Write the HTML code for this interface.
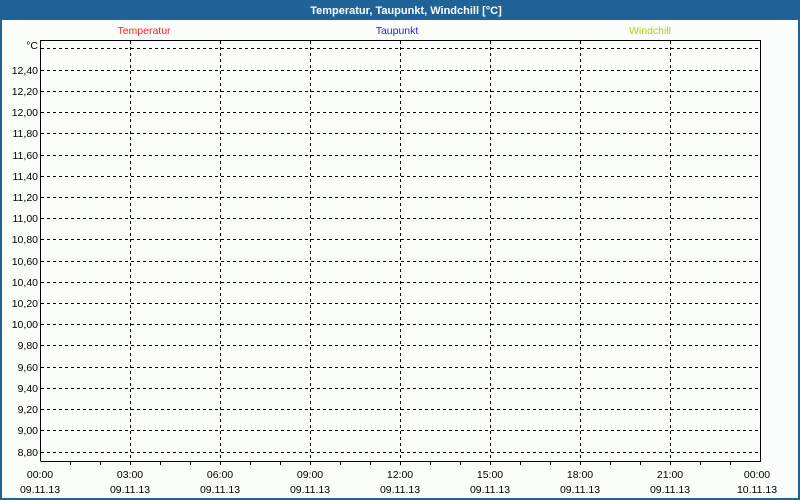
<!DOCTYPE html>
<html><head><meta charset="utf-8"><style>
html,body{margin:0;padding:0;width:800px;height:500px;overflow:hidden;background:#fbfdfb}
svg{display:block}
text{font-family:"Liberation Sans",sans-serif;font-size:10.5px}
</style></head><body>
<svg width="800" height="500" xmlns="http://www.w3.org/2000/svg">
<rect x="0" y="0" width="800" height="500" fill="#fbfdfb"/>
<rect x="1" y="1" width="798" height="498" fill="none" stroke="#1f6399" stroke-width="2"/>
<rect x="0" y="0" width="800" height="20" fill="#1f6399"/>
<text x="406" y="14" fill="#fff" text-anchor="middle" font-weight="bold" style="font-size:11px">Temperatur, Taupunkt, Windchill [°C]</text>
<text x="144" y="34" fill="#ff2020" text-anchor="middle">Temperatur</text>
<text x="397" y="34" fill="#2020ff" text-anchor="middle">Taupunkt</text>
<text x="650" y="34" fill="#a8d800" text-anchor="middle">Windchill</text>
<g stroke="#000" stroke-width="1" stroke-dasharray="3,3" shape-rendering="crispEdges">
<line x1="41" y1="48.5" x2="760" y2="48.5"/>
<line x1="41" y1="70.5" x2="760" y2="70.5"/>
<line x1="41" y1="91.5" x2="760" y2="91.5"/>
<line x1="41" y1="112.5" x2="760" y2="112.5"/>
<line x1="41" y1="133.5" x2="760" y2="133.5"/>
<line x1="41" y1="155.5" x2="760" y2="155.5"/>
<line x1="41" y1="176.5" x2="760" y2="176.5"/>
<line x1="41" y1="197.5" x2="760" y2="197.5"/>
<line x1="41" y1="218.5" x2="760" y2="218.5"/>
<line x1="41" y1="239.5" x2="760" y2="239.5"/>
<line x1="41" y1="261.5" x2="760" y2="261.5"/>
<line x1="41" y1="282.5" x2="760" y2="282.5"/>
<line x1="41" y1="303.5" x2="760" y2="303.5"/>
<line x1="41" y1="324.5" x2="760" y2="324.5"/>
<line x1="41" y1="345.5" x2="760" y2="345.5"/>
<line x1="41" y1="367.5" x2="760" y2="367.5"/>
<line x1="41" y1="388.5" x2="760" y2="388.5"/>
<line x1="41" y1="409.5" x2="760" y2="409.5"/>
<line x1="41" y1="430.5" x2="760" y2="430.5"/>
<line x1="41" y1="452.5" x2="760" y2="452.5"/>
<line x1="130.5" y1="41" x2="130.5" y2="461"/>
<line x1="220.5" y1="41" x2="220.5" y2="461"/>
<line x1="310.5" y1="41" x2="310.5" y2="461"/>
<line x1="400.5" y1="41" x2="400.5" y2="461"/>
<line x1="490.5" y1="41" x2="490.5" y2="461"/>
<line x1="580.5" y1="41" x2="580.5" y2="461"/>
<line x1="670.5" y1="41" x2="670.5" y2="461"/>
</g>
<g stroke="#000" stroke-width="1" shape-rendering="crispEdges" fill="none">
<polyline points="40.5,461 40.5,40.5 760.5,40.5 760.5,461.5 40.5,461.5"/>
<path d="M70.5 461v4M100.5 461v4M130.5 461v4M160.5 461v4M190.5 461v4M220.5 461v4M250.5 461v4M280.5 461v4M310.5 461v4M340.5 461v4M370.5 461v4M400.5 461v4M430.5 461v4M460.5 461v4M490.5 461v4M520.5 461v4M550.5 461v4M580.5 461v4M610.5 461v4M640.5 461v4M670.5 461v4M700.5 461v4M730.5 461v4"/>
</g>
<g fill="#000" text-anchor="end">
<text x="38" y="49">°C</text>
<text x="38" y="74">12,40</text>
<text x="38" y="95">12,20</text>
<text x="38" y="116">12,00</text>
<text x="38" y="137">11,80</text>
<text x="38" y="159">11,60</text>
<text x="38" y="180">11,40</text>
<text x="38" y="201">11,20</text>
<text x="38" y="222">11,00</text>
<text x="38" y="243">10,80</text>
<text x="38" y="265">10,60</text>
<text x="38" y="286">10,40</text>
<text x="38" y="307">10,20</text>
<text x="38" y="328">10,00</text>
<text x="38" y="349">9,80</text>
<text x="38" y="371">9,60</text>
<text x="38" y="392">9,40</text>
<text x="38" y="413">9,20</text>
<text x="38" y="434">9,00</text>
<text x="38" y="456">8,80</text>
</g>
<g fill="#000" text-anchor="middle">
<text x="40" y="478">00:00</text><text x="40" y="493">09.11.13</text>
<text x="130" y="478">03:00</text><text x="130" y="493">09.11.13</text>
<text x="220" y="478">06:00</text><text x="220" y="493">09.11.13</text>
<text x="310" y="478">09:00</text><text x="310" y="493">09.11.13</text>
<text x="400" y="478">12:00</text><text x="400" y="493">09.11.13</text>
<text x="490" y="478">15:00</text><text x="490" y="493">09.11.13</text>
<text x="580" y="478">18:00</text><text x="580" y="493">09.11.13</text>
<text x="670" y="478">21:00</text><text x="670" y="493">09.11.13</text>
<text x="757" y="478">00:00</text><text x="757" y="493">10.11.13</text>
</g>
</svg>
</body></html>
